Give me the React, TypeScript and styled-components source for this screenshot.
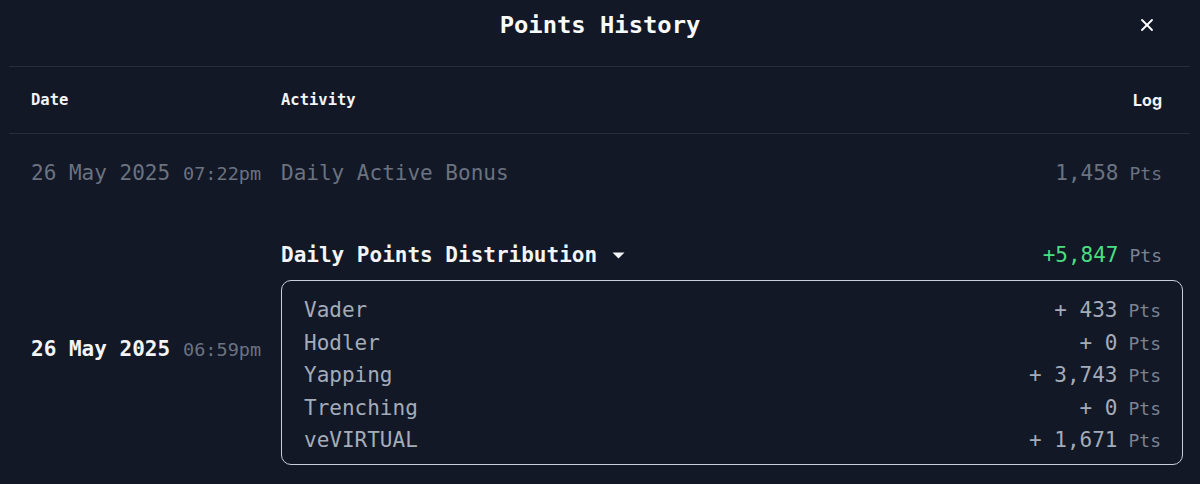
import React from "react";
import styled, { createGlobalStyle } from "styled-components";
import { X } from "lucide-react";

const GlobalStyle = createGlobalStyle`
  html, body {
    margin: 0;
    padding: 0;
    background: #121826;
  }
  body {
    font-family: "DejaVu Sans Mono", "Liberation Mono", monospace;
    color: #f3f4f6;
    -webkit-font-smoothing: antialiased;
  }
`;

const Modal = styled.div`
  width: 1200px;
  height: 484px;
  background: #121826;
  overflow: hidden;
  box-sizing: border-box;
`;

const TitleBar = styled.div`
  position: relative;
  display: flex;
  justify-content: center;
  align-items: center;
  height: 50px;
  margin-bottom: 16px;
`;

const Title = styled.h2`
  margin: 0;
  font-family: "DejaVu Sans Mono", monospace;
  font-weight: 700;
  font-size: 23.8px;
  line-height: 30px;
  color: #f9fafb;
`;

const CloseButton = styled.button`
  position: absolute;
  right: 43px;
  top: 15px;
  width: 20px;
  height: 20px;
  padding: 0;
  border: none;
  background: transparent;
  color: #ffffff;
  display: flex;
  align-items: center;
  justify-content: center;
  cursor: pointer;
`;

const Table = styled.div`
  margin: 0 10px 0 9px;
  display: flex;
  flex-direction: column;
`;

const HeadRow = styled.div`
  display: grid;
  grid-template-columns: 250px 1fr auto;
  align-items: center;
  height: 66px;
  padding: 0 28px 0 22px;
  border-top: 1px solid #262d3c;
  border-bottom: 1px solid #262d3c;
`;

const HeadCell = styled.div<{ $sans?: boolean }>`
  font-family: ${(p) =>
    p.$sans ? `"Inter", "Open Sans", sans-serif` : `"DejaVu Sans Mono", monospace`};
  font-weight: 700;
  font-size: ${(p) => (p.$sans ? "16px" : "15.5px")};
  line-height: 20px;
  color: #f3f4f6;
`;

const Row = styled.div<{ $pad: string }>`
  display: grid;
  grid-template-columns: 250px 1fr;
  padding: ${(p) => p.$pad};
`;

const DateCell = styled.div<{ $muted?: boolean; $nudge?: number }>`
  align-self: center;
  display: flex;
  align-items: baseline;
  white-space: nowrap;
  padding-bottom: ${(p) => p.$nudge ?? 0}px;
  color: ${(p) => (p.$muted ? "#6b7280" : "#f3f4f6")};
  font-size: 21px;
  line-height: 26px;
  font-weight: ${(p) => (p.$muted ? 400 : 700)};
`;

const TimeText = styled.span`
  margin-left: 13px;
  font-size: 18.5px;
  font-weight: 400;
  color: #6b7280;
`;

const LineItem = styled.div<{ $padRight?: number }>`
  display: flex;
  justify-content: space-between;
  align-items: baseline;
  padding-right: ${(p) => p.$padRight ?? 0}px;
`;

const ActivityText = styled.span<{ $tone: "muted" | "strong" | "soft" }>`
  display: inline-flex;
  align-items: center;
  font-size: 21px;
  line-height: 26px;
  font-weight: ${(p) => (p.$tone === "strong" ? 700 : 400)};
  color: ${(p) =>
    p.$tone === "muted" ? "#6b7280" : p.$tone === "strong" ? "#f3f4f6" : "#a4acba"};
`;

const Amount = styled.span<{ $tone: "muted" | "green" | "soft" }>`
  font-size: 21px;
  line-height: 26px;
  white-space: pre;
  color: ${(p) =>
    p.$tone === "muted" ? "#6b7280" : p.$tone === "green" ? "#4ade80" : "#a4acba"};
`;

const Unit = styled.span<{ $tone?: "muted" | "soft" }>`
  margin-left: 11px;
  font-size: 18px;
  color: ${(p) => (p.$tone === "soft" ? "#7b8392" : "#6b7280")};
`;

const Caret = styled.svg`
  margin-left: 15px;
  width: 13px;
  height: 7px;
`;

const ActivityColumn = styled.div`
  display: flex;
  flex-direction: column;
  gap: 11px;
`;

const BreakdownBox = styled.div`
  border: 1px solid #c8cfdb;
  border-radius: 10px;
  padding: 16px 21px 4px 22px;
  display: flex;
  flex-direction: column;
`;

const BreakdownRow = styled.div`
  display: flex;
  justify-content: space-between;
  align-items: baseline;
  height: 32.5px;
  line-height: 32.5px;
`;

const breakdown = [
  { name: "Vader", value: "433" },
  { name: "Hodler", value: "0" },
  { name: "Yapping", value: "3,743" },
  { name: "Trenching", value: "0" },
  { name: "veVIRTUAL", value: "1,671" },
];

export default function App() {
  return (
    <>
      <GlobalStyle />
      <Modal>
        <TitleBar>
          <Title>Points History</Title>
          <CloseButton aria-label="Close">
            <X size={20} strokeWidth={2.2} />
          </CloseButton>
        </TitleBar>
        <Table>
          <HeadRow>
            <HeadCell>Date</HeadCell>
            <HeadCell>Activity</HeadCell>
            <HeadCell $sans>Log</HeadCell>
          </HeadRow>

          <Row $pad="26px 28px 25px 22px">
            <DateCell $muted>
              26 May 2025<TimeText>07:22pm</TimeText>
            </DateCell>
            <LineItem>
              <ActivityText $tone="muted">Daily Active Bonus</ActivityText>
              <Amount $tone="muted">
                1,458<Unit>Pts</Unit>
              </Amount>
            </LineItem>
          </Row>

          <Row $pad="30px 7px 18px 22px">
            <DateCell $nudge={7}>
              26 May 2025<TimeText>06:59pm</TimeText>
            </DateCell>
            <ActivityColumn>
              <LineItem $padRight={21}>
                <ActivityText $tone="strong">
                  Daily Points Distribution
                  <Caret viewBox="0 0 13 7">
                    <path d="M0.5 0.5 L12.5 0.5 L6.5 6.5 Z" fill="#f3f4f6" />
                  </Caret>
                </ActivityText>
                <Amount $tone="green">
                  +5,847<Unit $tone="soft">Pts</Unit>
                </Amount>
              </LineItem>
              <BreakdownBox>
                {breakdown.map((b) => (
                  <BreakdownRow key={b.name}>
                    <ActivityText $tone="soft">{b.name}</ActivityText>
                    <Amount $tone="soft">
                      {"+ " + b.value}
                      <Unit $tone="soft">Pts</Unit>
                    </Amount>
                  </BreakdownRow>
                ))}
              </BreakdownBox>
            </ActivityColumn>
          </Row>
        </Table>
      </Modal>
    </>
  );
}
